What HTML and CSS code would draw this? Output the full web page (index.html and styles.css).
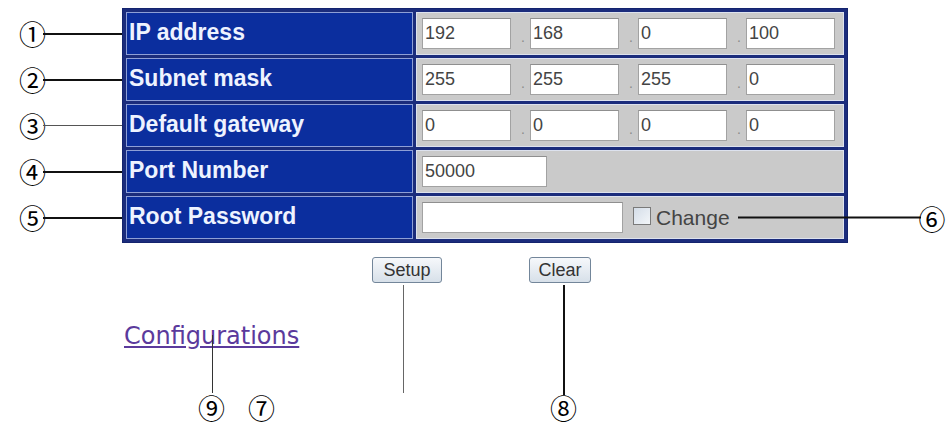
FILE: index.html
```html
<!DOCTYPE html>
<html lang="en">
<head>
    <meta charset="UTF-8">
    <title>Network Setup</title>
    <link rel="stylesheet" href="styles.css">
</head>
<body>
    <div class="page">
        <div class="setup">
            <!-- Callouts for each row -->
            <ol class="marks-left">
                <li><span class="num">①</span><span class="rule"></span></li>
                <li><span class="num">②</span><span class="rule"></span></li>
                <li><span class="num">③</span><span class="rule rule-thin"></span></li>
                <li><span class="num">④</span><span class="rule"></span></li>
                <li><span class="num">⑤</span><span class="rule"></span></li>
            </ol>

            <table class="net-form">
                <colgroup>
                    <col class="col-label">
                    <col class="col-value">
                </colgroup>
                <tr>
                    <th>IP address</th>
                    <td>
                        <div class="field-group">
                            <input class="octet" type="text" value="192"><span class="dot">.</span>
                            <input class="octet" type="text" value="168"><span class="dot">.</span>
                            <input class="octet" type="text" value="0"><span class="dot">.</span>
                            <input class="octet" type="text" value="100">
                        </div>
                    </td>
                </tr>
                <tr>
                    <th>Subnet mask</th>
                    <td>
                        <div class="field-group">
                            <input class="octet" type="text" value="255"><span class="dot">.</span>
                            <input class="octet" type="text" value="255"><span class="dot">.</span>
                            <input class="octet" type="text" value="255"><span class="dot">.</span>
                            <input class="octet" type="text" value="0">
                        </div>
                    </td>
                </tr>
                <tr>
                    <th>Default gateway</th>
                    <td>
                        <div class="field-group">
                            <input class="octet" type="text" value="0"><span class="dot">.</span>
                            <input class="octet" type="text" value="0"><span class="dot">.</span>
                            <input class="octet" type="text" value="0"><span class="dot">.</span>
                            <input class="octet" type="text" value="0">
                        </div>
                    </td>
                </tr>
                <tr>
                    <th>Port Number</th>
                    <td>
                        <div class="field-group">
                            <input class="port" type="text" value="50000">
                        </div>
                    </td>
                </tr>
                <tr>
                    <th>Root Password</th>
                    <td>
                        <div class="field-group">
                            <input class="password" type="password" value="">
                            <input class="check" type="checkbox" id="change">
                            <label class="change" for="change">Change<span class="callout-right"><span class="rule"></span><span class="num">⑥</span></span></label>
                        </div>
                    </td>
                </tr>
            </table>
        </div>

        <div class="actions">
            <span class="btn-wrap">
                <button class="btn btn-setup">Setup</button>
                <span class="leader leader-setup"></span>
            </span>
            <span class="btn-wrap btn-wrap-clear">
                <button class="btn btn-clear">Clear</button>
                <span class="leader leader-clear"></span>
            </span>
        </div>

        <div class="links">
            <a class="config-link" href="#">Configurations<span class="leader leader-config"></span></a>
        </div>

        <div class="marks-bottom">
            <span class="num">⑨</span>
            <span class="num num-7">⑦</span>
            <span class="num num-8">⑧</span>
        </div>
    </div>
</body>
</html>
```

FILE: styles.css
```css
* {
    box-sizing: border-box;
}

body {
    margin: 0;
    background: #fff;
    font-family: "Liberation Sans", Arial, sans-serif;
    color: #222;
}

.page {
    width: 948px;
    height: 426px;
    overflow: hidden;
}

.setup {
    display: flex;
    align-items: flex-start;
}

/* Callout numbers + leader lines */
.num {
    font-family: "Noto Sans CJK JP", "DejaVu Sans", sans-serif;
    font-size: 27px;
    line-height: 1;
    color: #000;
}

.rule {
    flex: 1;
    height: 2px;
    background: #111;
}

.rule-thin {
    height: 1px;
    background: #555;
}

.marks-left {
    list-style: none;
    margin: 0;
    padding: 12px 0 0 19px;
    width: 122px;
    flex-shrink: 0;
    display: flex;
    flex-direction: column;
    gap: 3px;
}

.marks-left li {
    height: 43px;
    display: flex;
    align-items: center;
}

.marks-left .num {
    margin-right: -3px;
}

/* Settings table */
.net-form {
    margin-top: 8px;
    width: 726px;
    table-layout: fixed;
    border-collapse: separate;
    border-spacing: 3px;
    border: 1px solid #14246e;
    background: #1b2c7c;
}

.col-label {
    width: 287px;
}

.col-value {
    width: 428px;
}

.net-form th,
.net-form td {
    height: 43px;
    padding: 0;
    border: 1px solid #8e9fd6;
    vertical-align: middle;
}

.net-form th {
    background: #0b2e9e;
    color: #eef3ff;
    font-size: 23px;
    font-weight: bold;
    text-align: left;
    padding: 0 0 3px 2px;
}

.net-form td {
    background: #cacaca;
    border-color: #dde2ee;
    padding-left: 5px;
}

.field-group {
    display: flex;
    align-items: center;
}

.octet,
.port,
.password {
    height: 31px;
    margin: 0;
    padding: 0 2px;
    border: 1px solid #a2a2a2;
    border-top-color: #8f8f8f;
    background: #fff;
    font: 18px "Liberation Sans", Arial, sans-serif;
    color: #444;
    outline: none;
}

.octet {
    width: 89px;
}

.port {
    width: 125px;
}

.password {
    width: 201px;
}

.dot {
    width: 19px;
    align-self: flex-end;
    text-align: right;
    padding: 0 5px 5px 0;
    font-size: 14px;
    line-height: 1;
    color: #8a8a8a;
}

.check {
    appearance: none;
    -webkit-appearance: none;
    width: 18px;
    height: 18px;
    margin: -4px 5px 0 10px;
    border: 1px solid #7a7a7a;
    background: linear-gradient(135deg, #d4dde8, #f3f6f9);
}

.change {
    position: relative;
    font-size: 21px;
    color: #444;
}

.callout-right {
    position: absolute;
    left: calc(100% + 8px);
    top: 50%;
    transform: translateY(-50%);
    display: flex;
    align-items: center;
}

.callout-right .rule {
    flex: none;
    width: 183px;
}

.callout-right .num {
    margin-left: -2px;
}

/* Buttons */
.actions {
    display: flex;
    margin-top: 14px;
    padding-left: 372px;
}

.btn-wrap {
    position: relative;
    display: block;
}

.btn-wrap-clear {
    margin-left: 87px;
}

.btn {
    display: block;
    height: 26px;
    padding: 0;
    border: 1px solid #73869a;
    border-radius: 3px;
    background: linear-gradient(#f6f8fb, #d7e0e9);
    font: 18px "Liberation Sans", Arial, sans-serif;
    color: #333;
}

.btn-setup {
    width: 70px;
}

.btn-clear {
    width: 62px;
}

.leader {
    position: absolute;
    width: 2px;
    background: #111;
}

.leader-setup {
    top: 28px;
    left: 31px;
    width: 1px;
    height: 108px;
    background: #666;
}

.leader-clear {
    top: 28px;
    left: 34px;
    height: 110px;
}

/* Link */
.links {
    margin-top: 39px;
    padding-left: 124px;
    font-family: "DejaVu Sans", sans-serif;
    font-size: 24px;
    line-height: 28px;
}

.config-link {
    position: relative;
    color: #5b3a9c;
    text-decoration: underline;
}

.leader-config {
    left: 88px;
    top: 13px;
    width: 1px;
    height: 58px;
    background: #333;
}

.marks-bottom {
    display: flex;
    margin-top: 44px;
    padding-left: 198px;
}

.num-7 {
    margin-left: 23px;
}

.num-8 {
    margin-left: 275px;
}
```
